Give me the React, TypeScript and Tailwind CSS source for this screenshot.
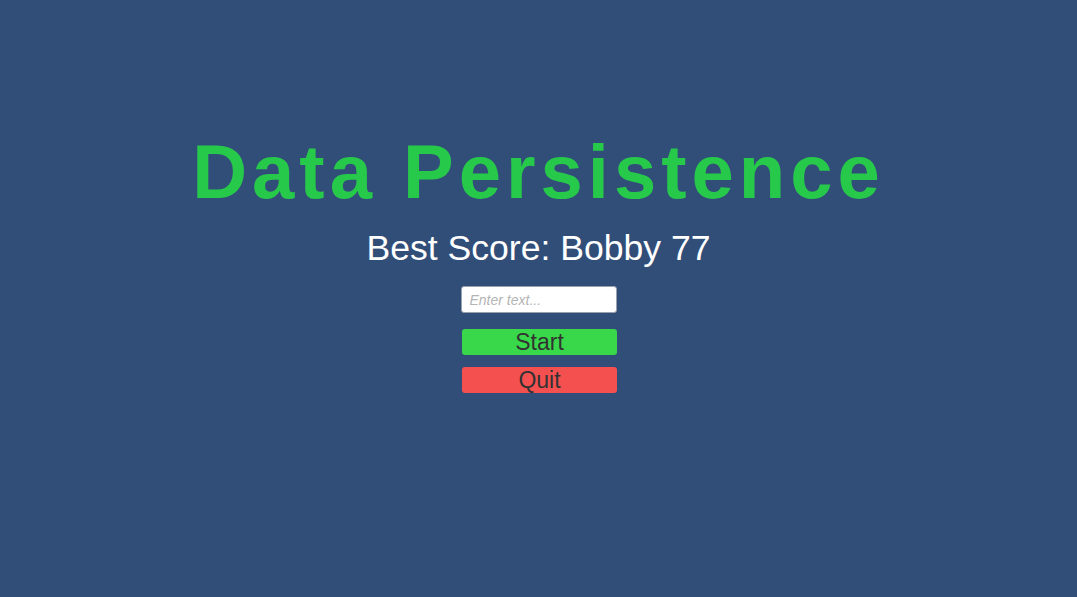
export default function App() {
  return (
    <div className="flex h-[597px] w-full flex-col items-center bg-[#314e79] pt-[130px] font-['Liberation_Sans',Arial,sans-serif]">
      <h1 className="text-[76px] leading-[84px] font-bold tracking-[5px] text-[#27c94a]">
        Data Persistence
      </h1>
      <p className="mt-[14px] text-[35.6px] leading-[40px] text-white">Best Score: Bobby 77</p>
      <input
        type="text"
        placeholder="Enter text..."
        className="mt-[18px] h-[27px] w-[156px] rounded-[3px] border border-gray-400 bg-white px-2 text-[14px] italic text-gray-800 placeholder:text-[#b4b4b4] outline-none"
      />
      <button className="mt-[16px] ml-[2px] h-[26px] w-[155px] rounded-[3px] bg-[#38d84a] text-[23px] leading-[26px] text-[#323232]">
        Start
      </button>
      <button className="mt-[12px] ml-[2px] h-[26px] w-[155px] rounded-[3px] bg-[#f55050] text-[23px] leading-[26px] text-[#323232]">
        Quit
      </button>
    </div>
  )
}
